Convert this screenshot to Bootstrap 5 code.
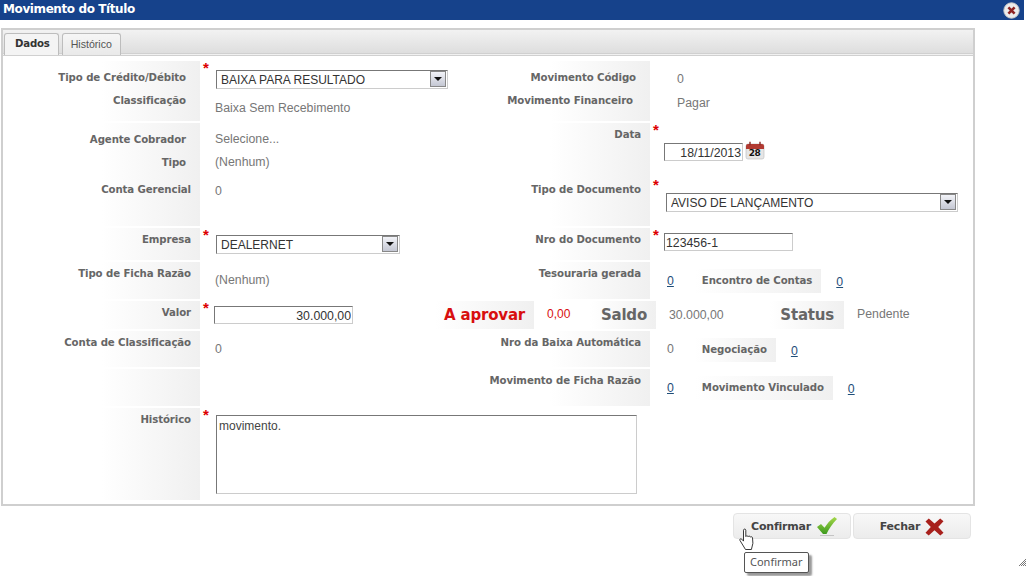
<!DOCTYPE html>
<html lang="pt-BR">
<head>
  <meta charset="UTF-8">
  <meta name="viewport" content="width=device-width, initial-scale=1.0">
  <title>Movimento do Título</title>
  <link rel="stylesheet" href="https://cdn.jsdelivr.net/npm/bootstrap@5.3.0/dist/css/bootstrap.min.css">
  <style>
    body {
      background: #fff;
      font-family: "Liberation Sans", Arial, sans-serif;
      font-size: 12.3px;
      color: #777;
      width: 1030px;
      height: 576px;
      overflow: hidden;
    }
    .title-bar {
      width: 1024px;
      height: 20px;
      background: #16428b;
      color: #fff;
      font: bold 12px/19px "DejaVu Sans", sans-serif;
      letter-spacing: -0.4px;
      padding-left: 3px;
    }
    .panel-box {
      width: 974px;
      height: 478px;
      margin: 8px 0 0 1px;
      border: 2px solid #cfcfcf;
    }
    .tab-strip {
      height: 26px;
      padding: 3px 0 0 1px;
      gap: 3px;
      background: linear-gradient(#f2f2f2, #dedede);
      border-bottom: 3px double #d0d0d0;
    }
    .tab-item {
      height: 22px;
      padding: 0 8px;
      border: 1px solid #bdbdbd;
      border-bottom: 0;
      border-radius: 3px 3px 0 0;
      background: linear-gradient(#f6f6f6, #e9e9e9);
      color: #555;
      font-size: 10.6px;
      line-height: 20px;
    }
    .tab-item.on {
      background: #f4f4f4;
      color: #333;
      font: bold 10.2px/20px "DejaVu Sans", sans-serif;
      letter-spacing: -0.2px;
      padding: 0 8px 0 10px;
    }
    .form-rows { padding-top: 5px; gap: 2px; }
    .form-line {
      display: grid;
      grid-template-columns: 197px 250px 200px 1fr;
    }
    .h1r { height: 60px; }
    .h2r { height: 53px; }
    .h3r { height: 48px; }
    .h4r { height: 32px; }
    .h5r { height: 37px; }
    .h6r { height: 28px; }
    .h7r { height: 36px; }
    .h8r { height: 37px; }
    .h9r { height: 92px; }
    .lbl {
      background: linear-gradient(90deg, #fff 50%, #f0f0f0);
      font: bold 10.2px/15px "DejaVu Sans", sans-serif;
      color: #666;
      text-align: right;
      padding: 4px 9px 0 0;
      letter-spacing: -0.1px;
    }
    .lbl-wide { padding-right: 14px; }
    .lbl-two { padding-top: 9px; }
    .lbl-two > div { height: 23px; }
    .lbl-fin { margin-right: 3px; }
    .lbl-lead { width: 197px; }
    .val {
      position: relative;
      padding-left: 15px;
      line-height: 15px;
    }
    .val-right { padding-left: 17px; }
    .val-info { padding-left: 27px; }
    .req {
      position: absolute;
      left: 3px;
      top: -1px;
      color: #d00;
      font: bold 15px/15px "Liberation Sans", sans-serif;
    }
    .pick-wrap { position: relative; }
    .pick-box {
      display: block;
      height: 19px;
      appearance: none;
      border: 1px solid #ccc;
      border-top-color: #777;
      border-left-color: #777;
      border-radius: 0;
      background: #fff;
      color: #333;
      padding: 1px 0 0 4px;
      font: 12px/17px "Liberation Sans", sans-serif;
    }
    .drop-btn {
      position: absolute;
      top: 1px;
      right: 2px;
      width: 16px;
      height: 16px;
      border: 1px solid #888;
      background: linear-gradient(#f2f3f8, #c4c7d3);
    }
    .drop-btn::after {
      content: "";
      position: absolute;
      left: 3px;
      top: 5px;
      border: 4px solid transparent;
      border-top: 4px solid #111;
      border-bottom: 0;
    }
    .text-box {
      display: block;
      height: 18px;
      border: 1px solid #ccc;
      border-top-color: #777;
      border-left-color: #777;
      border-radius: 0;
      color: #333;
      padding: 1px 1px 0;
      font: 12.3px/15px "Liberation Sans", sans-serif;
      background: #fff;
    }
    .sel-tipo { width: 232px; margin: 9px 0 0 1px; }
    .sel-doc { width: 292px; margin: 15px 0 0 1px; }
    .sel-emp { width: 184px; margin: 7px 0 0 1px; }
    .box-valor { width: 139px; margin: 5px 0 0 -1px; text-align: right; }
    .box-data { width: 79px; text-align: right; }
    .box-nro { width: 129px; margin: 5px 0 0 -1px; }
    .data-row { margin: 20px 0 0 -1px; gap: 2px; }
    .area-hist {
      display: block;
      width: 421px;
      height: 79px;
      margin: 7px 0 0 1px;
      padding: 3px 2px;
      resize: none;
      border: 1px solid #ccc;
      border-top-color: #777;
      border-left-color: #777;
      color: #444;
      font: 12px/15px "Liberation Sans", sans-serif;
    }
    .txt-classif { padding-top: 12px; }
    .txt-sel { padding-top: 9px; }
    .txt-tipo { padding-top: 8px; }
    .txt-conta { padding-top: 6px; }
    .txt-ficha { padding-top: 11px; }
    .txt-class0 { padding-top: 11px; }
    .txt-cod { padding-top: 11px; }
    .txt-pagar { padding-top: 9px; }
    .lnk-row { padding-top: 7px; }
    .mini-lbl {
      background: linear-gradient(90deg, #fff, #f0f0f0);
      font: bold 10.2px/24px "DejaVu Sans", sans-serif;
      color: #666;
      height: 24px;
      padding: 0 9px 0 7px;
      margin: 0 15px 0 21px;
      letter-spacing: -0.1px;
    }
    .lnk { color: #1f4e79; position: relative; top: 6px; }
    .lnk-first { top: 5px; }
    .num-first { position: relative; top: 4px; }
    .val-lead { width: 235px; position: relative; padding-left: 15px; }
    .big-lbl {
      background: linear-gradient(90deg, #fff, #f0f0f0);
      font: bold 15px/29px "DejaVu Sans", sans-serif;
      color: #666;
      height: 28px;
      text-align: right;
      letter-spacing: -0.2px;
    }
    .big-aprovar { width: 99px; padding-right: 9px; color: #d80f0f; }
    .big-saldo { width: 66px; padding-right: 9px; }
    .big-status { width: 74px; padding-right: 10px; }
    .amt { line-height: 26px; }
    .amt-zero { width: 56px; padding-left: 13px; color: #d80f0f; font-size: 12px; }
    .amt-saldo { width: 114px; padding-left: 13px; line-height: 28px; }
    .amt-status { padding-left: 13px; }
    .action-row {
      width: 971px;
      margin-top: 7px;
      gap: 2px;
    }
    .act-btn {
      width: 118px;
      height: 26px;
      border: 1px solid #e4e4e4;
      border-radius: 4px;
      background: linear-gradient(#f8f8f8, #ececec);
      color: #444;
      font: bold 11px/24px "DejaVu Sans", sans-serif;
      letter-spacing: -0.2px;
      gap: 5px;
      padding-top: 1px;
    }
    .act-ok { padding-left: 4px; gap: 6px; }
    .hint {
      position: absolute;
      left: 744px;
      top: 552px;
      height: 21px;
      padding: 0 5px;
      background: #fff;
      border: 1px solid #555;
      border-radius: 2px;
      box-shadow: 3px 3px 2px #999;
      color: #555;
      line-height: 18px;
      font-family: "Noto Sans", sans-serif;
      font-size: 11px;
    }
    .ico-close { position: absolute; left: 1003px; top: 2px; }
    .ico-hand { position: absolute; left: 739px; top: 528px; }
    .ico-grip { position: absolute; left: 1018px; top: 558px; }
    .cal-wrap { position: relative; width: 20px; height: 19px; margin-top: -2px; }
    .cal-day {
      position: absolute;
      left: 0;
      right: 1px;
      top: 7px;
      text-align: center;
      font: bold 9px/10px "DejaVu Sans", sans-serif;
      letter-spacing: -0.4px;
      color: #111;
    }
  </style>
</head>
<body>
  <div class="title-bar">Movimento do Título</div>
  <svg class="ico-close" width="17" height="17" viewBox="0 0 17 17"><circle cx="8.5" cy="8.5" r="7.700" fill="#ececec" stroke="#c9c9c9"/><path d="M5.400 5.400l6.200 6.200M11.600 5.400l-6.200 6.200" stroke="#8e2323" stroke-width="2.600"/></svg>

  <div class="panel-box">
    <div class="tab-strip d-flex">
      <div class="tab-item on">Dados</div>
      <div class="tab-item">Histórico</div>
    </div>
    <div class="form-rows d-flex flex-column">

      <div class="form-line h1r">
        <div class="lbl lbl-two lbl-wide"><div>Tipo de Crédito/Débito</div><div>Classificação</div></div>
        <div class="val">
          <span class="req">*</span>
          <div class="pick-wrap sel-tipo">
            <select class="pick-box w-100"><option>BAIXA PARA RESULTADO</option></select>
            <span class="drop-btn"></span>
          </div>
          <div class="txt-classif">Baixa Sem Recebimento</div>
        </div>
        <div class="lbl lbl-two lbl-wide"><div>Movimento Código</div><div class="lbl-fin">Movimento Financeiro</div></div>
        <div class="val val-info">
          <div class="txt-cod">0</div>
          <div class="txt-pagar">Pagar</div>
        </div>
      </div>

      <div class="form-line h2r">
        <div class="lbl lbl-two lbl-wide"><div>Agente Cobrador</div><div>Tipo</div></div>
        <div class="val">
          <div class="txt-sel">Selecione...</div>
          <div class="txt-tipo">(Nenhum)</div>
        </div>
        <div class="lbl">Data</div>
        <div class="val">
          <span class="req">*</span>
          <div class="data-row d-flex">
            <input class="text-box box-data" type="text" value="18/11/2013">
            <div class="cal-wrap">
              <svg width="20" height="19" viewBox="0 0 20 19"><rect x="1" y="3" width="18" height="15" rx="2" fill="#e6e6e6" stroke="#bbb" stroke-width=".6"/><path d="M1 8V5a2 2 0 0 1 2-2h14a2 2 0 0 1 2 2v3z" fill="#b23a32"/><path d="M5 .8v3.400M15 .8v3.400" stroke="#8a2a25" stroke-width="1.400"/></svg>
              <span class="cal-day">28</span>
            </div>
          </div>
        </div>
      </div>

      <div class="form-line h3r">
        <div class="lbl">Conta Gerencial</div>
        <div class="val"><div class="txt-conta">0</div></div>
        <div class="lbl">Tipo de Documento</div>
        <div class="val">
          <span class="req">*</span>
          <div class="pick-wrap sel-doc">
            <select class="pick-box w-100"><option>AVISO DE LANÇAMENTO</option></select>
            <span class="drop-btn"></span>
          </div>
        </div>
      </div>

      <div class="form-line h4r">
        <div class="lbl">Empresa</div>
        <div class="val">
          <span class="req">*</span>
          <div class="pick-wrap sel-emp">
            <select class="pick-box w-100"><option>DEALERNET</option></select>
            <span class="drop-btn"></span>
          </div>
        </div>
        <div class="lbl">Nro do Documento</div>
        <div class="val">
          <span class="req">*</span>
          <input class="text-box box-nro" type="text" value="123456-1">
        </div>
      </div>

      <div class="form-line h5r">
        <div class="lbl">Tipo de Ficha Razão</div>
        <div class="val"><div class="txt-ficha">(Nenhum)</div></div>
        <div class="lbl">Tesouraria gerada</div>
        <div class="val val-right d-flex align-items-start lnk-row">
          <a class="lnk lnk-first" href="#">0</a>
          <div class="mini-lbl">Encontro de Contas</div>
          <a class="lnk" href="#">0</a>
        </div>
      </div>

      <div class="d-flex h6r">
        <div class="lbl lbl-lead flex-shrink-0">Valor</div>
        <div class="val-lead">
          <span class="req">*</span>
          <input class="text-box box-valor" type="text" value="30.000,00">
        </div>
        <div class="big-lbl big-aprovar">A aprovar</div>
        <div class="amt amt-zero">0,00</div>
        <div class="big-lbl big-saldo">Saldo</div>
        <div class="amt amt-saldo">30.000,00</div>
        <div class="big-lbl big-status">Status</div>
        <div class="amt amt-status">Pendente</div>
      </div>

      <div class="form-line h7r">
        <div class="lbl">Conta de Classificação</div>
        <div class="val"><div class="txt-class0">0</div></div>
        <div class="lbl">Nro da Baixa Automática</div>
        <div class="val val-right d-flex align-items-start lnk-row">
          <span class="num-first">0</span>
          <div class="mini-lbl">Negociação</div>
          <a class="lnk" href="#">0</a>
        </div>
      </div>

      <div class="form-line h8r">
        <div class="lbl"></div>
        <div class="val"></div>
        <div class="lbl">Movimento de Ficha Razão</div>
        <div class="val val-right d-flex align-items-start lnk-row">
          <a class="lnk lnk-first" href="#">0</a>
          <div class="mini-lbl">Movimento Vinculado</div>
          <a class="lnk" href="#">0</a>
        </div>
      </div>

      <div class="form-line h9r">
        <div class="lbl">Histórico</div>
        <div class="val">
          <span class="req">*</span>
          <textarea class="area-hist">movimento.</textarea>
        </div>
      </div>
    </div>
  </div>

  <div class="action-row d-flex justify-content-end">
    <div class="act-btn act-ok d-flex justify-content-center align-items-center">
      Confirmar
      <svg width="20" height="19" viewBox="0 0 20 19"><defs><linearGradient id="gck" x1="0" y1="0" x2="0" y2="1"><stop offset="0" stop-color="#a6d84a"/><stop offset="1" stop-color="#3d9a1e"/></linearGradient></defs><path d="M0 10l4-3 3.500 3.800C10 7 13 3 17.500 0L20 2C15.500 6.500 12 11.500 9.500 17H6z" fill="url(#gck)"/><path d="M3 18.500h14" stroke="#c4c4c4"/></svg>
    </div>
    <div class="act-btn d-flex justify-content-center align-items-center">
      Fechar
      <svg width="19" height="18" viewBox="0 0 19 18"><path d="M.5 3.500L3.800.5l5.700 5 5.700-5L18.500 3.200 13.200 9l5.300 5.800-3.200 2.700-5.800-5.300-5.800 5.300-3.200-2.700L5.800 9z" fill="#a8201c"/></svg>
    </div>
  </div>

  <svg class="ico-hand" width="18" height="24" viewBox="0 0 18 24"><path d="M4.500 2.200c0-1.500 2.300-1.500 2.300 0v6.300c.4-1 2.100-.9 2.300.2.300-.9 2.100-.8 2.300.4.500-.7 2-.4 2.100.7l.4 5.500-1.500 6.200H6.500L1 12.500c-.7-1.300.7-2.300 1.700-1.400l1.800 2z" fill="#fff" stroke="#222" stroke-width=".9"/></svg>
  <div class="hint">Confirmar</div>
  <svg class="ico-grip" width="9" height="9" viewBox="0 0 9 9"><path d="M1 8l7-7M3 8l5-5M5 8l3-3M7 8l1-1" stroke="#555" stroke-width=".8"/></svg>

  <script src="https://cdn.jsdelivr.net/npm/bootstrap@5.3.0/dist/js/bootstrap.bundle.min.js"></script>
</body>
</html>
